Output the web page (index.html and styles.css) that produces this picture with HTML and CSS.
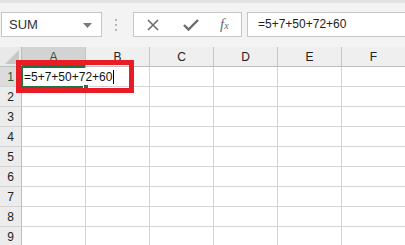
FILE: index.html
```html
<!DOCTYPE html>
<html lang="en">
<head>
    <meta charset="UTF-8">
    <title>Sheet</title>
    <link rel="stylesheet" href="styles.css">
</head>
<body>
    <!-- formula bar -->
    <div class="toolbar">
        <div class="namebox">
            <span>SUM</span>
            <svg class="caret" width="9" height="5" viewBox="0 0 9 5"><path d="M0 0 H9 L4.5 5 Z" fill="#7a7a7a"/></svg>
        </div>
        <div class="grip"><i></i><i></i><i></i></div>
        <div class="fxbox">
            <svg class="icon" width="12" height="12" viewBox="0 0 12 12"><path d="M1 1 L11 11 M11 1 L1 11" stroke="#6b6b6b" stroke-width="1.6" fill="none"/></svg>
            <svg class="icon" width="16" height="12" viewBox="0 0 16 12"><path d="M1 6 L5.5 10.5 L15 1" stroke="#6b6b6b" stroke-width="2.4" fill="none"/></svg>
            <span class="fx">f<sub>x</sub></span>
        </div>
        <div class="formula">=5+7+50+72+60</div>
    </div>

    <!-- grid -->
    <div class="sheet">
        <div class="corner"><i></i></div>
        <div class="colhead selected">A</div>
        <div class="colhead">B</div>
        <div class="colhead">C</div>
        <div class="colhead">D</div>
        <div class="colhead">E</div>
        <div class="colhead">F</div>

        <div class="rowhead selected">1</div>
        <div class="cell active">
            <span class="entry">=5+7+50+72+60<b class="cursor"></b></span>
            <i class="handle"></i>
        </div>
        <div class="cell"></div><div class="cell"></div><div class="cell"></div><div class="cell"></div><div class="cell"></div>

        <div class="rowhead">2</div>
        <div class="cell"></div><div class="cell"></div><div class="cell"></div><div class="cell"></div><div class="cell"></div><div class="cell"></div>
        <div class="rowhead">3</div>
        <div class="cell"></div><div class="cell"></div><div class="cell"></div><div class="cell"></div><div class="cell"></div><div class="cell"></div>
        <div class="rowhead">4</div>
        <div class="cell"></div><div class="cell"></div><div class="cell"></div><div class="cell"></div><div class="cell"></div><div class="cell"></div>
        <div class="rowhead">5</div>
        <div class="cell"></div><div class="cell"></div><div class="cell"></div><div class="cell"></div><div class="cell"></div><div class="cell"></div>
        <div class="rowhead">6</div>
        <div class="cell"></div><div class="cell"></div><div class="cell"></div><div class="cell"></div><div class="cell"></div><div class="cell"></div>
        <div class="rowhead">7</div>
        <div class="cell"></div><div class="cell"></div><div class="cell"></div><div class="cell"></div><div class="cell"></div><div class="cell"></div>
        <div class="rowhead">8</div>
        <div class="cell"></div><div class="cell"></div><div class="cell"></div><div class="cell"></div><div class="cell"></div><div class="cell"></div>
        <div class="rowhead">9</div>
        <div class="cell"></div><div class="cell"></div><div class="cell"></div><div class="cell"></div><div class="cell"></div><div class="cell"></div>
    </div>

    <!-- red highlight drawn over the sheet -->
    <div class="mark"></div>
</body>
</html>
```

FILE: styles.css
```css
* {
    box-sizing: border-box;
}

body {
    margin: 0;
    width: 405px;
    height: 245px;
    overflow: hidden;
    position: relative;
    background-color: #fff;
    font-family: "Liberation Sans", Arial, sans-serif;
    color: #222;
}

.toolbar {
    height: 47px;
    background-color: #f3f3f3;
    border-top: 3px solid #e3e3e3;
    display: flex;
    align-items: flex-start;
    padding-top: 9px;
    padding-left: 1px;
}

.namebox {
    width: 101px;
    height: 25px;
    background-color: #fff;
    border: 1px solid #c6c6c6;
    display: flex;
    align-items: center;
    justify-content: space-between;
    padding: 0 9px 0 7px;
    font-size: 13px;
    color: #333;
}

.caret {
    margin-top: 1px;
}

.grip {
    width: 31px;
    height: 25px;
    padding-right: 3px;
    display: flex;
    flex-direction: column;
    align-items: center;
    justify-content: center;
    gap: 3px;
}

.grip i {
    width: 2px;
    height: 2px;
    background-color: #b5b5b5;
}

.fxbox {
    width: 109px;
    height: 25px;
    background-color: #fff;
    border: 1px solid #c6c6c6;
    display: flex;
    align-items: center;
    padding-left: 13px;
    gap: 24px;
}

.fx {
    font-family: "Liberation Serif", "Times New Roman", serif;
    font-style: italic;
    font-size: 15px;
    color: #6b6b6b;
    margin-left: -3px;
}

.fx sub {
    font-size: 10px;
    vertical-align: 0;
}

.formula {
    flex: 1;
    height: 25px;
    margin-left: 5px;
    background-color: #fff;
    border: 1px solid #c6c6c6;
    border-right: none;
    padding-left: 10px;
    font-size: 12px;
    line-height: 23px;
    color: #222;
}

.sheet {
    display: grid;
    grid-template-columns: 22px repeat(6, 64px);
    grid-auto-rows: 20px;
}

.corner {
    background-color: #e9e9e9;
    border-right: 1px solid #bdbdbd;
    border-bottom: 1px solid #bdbdbd;
    position: relative;
}

.corner i {
    position: absolute;
    right: 2px;
    bottom: 2px;
    width: 0;
    height: 0;
    border-left: 14px solid transparent;
    border-bottom: 14px solid #c8c8c8;
}

.colhead {
    background-color: #efefef;
    border-right: 1px solid #c6c6c6;
    border-bottom: 1px solid #bdbdbd;
    text-align: center;
    font-size: 12px;
    line-height: 20px;
    color: #222;
}

.colhead.selected {
    background-color: #d3d3d3;
    border-bottom: 2px solid #217346;
    color: #185c37;
}

.rowhead {
    background-color: #ececec;
    border-right: 1px solid #bdbdbd;
    border-bottom: 1px solid #d4d4d4;
    text-align: center;
    font-size: 12px;
    line-height: 20px;
    color: #222;
}

.rowhead.selected {
    background-color: #dcdcdc;
    color: #185c37;
}

.cell {
    border-right: 1px solid #d4d4d4;
    border-bottom: 1px solid #d4d4d4;
}

/* cell in edit mode: the text runs over B1, so no line on its right */
.cell.active {
    position: relative;
    border: 2px solid #217346;
    border-right: 1px solid #fff;
    margin: -1px 0 -1px -1px;
}

.entry {
    position: absolute;
    left: 1px;
    top: 1px;
    font-size: 12px;
    line-height: 17px;
    white-space: nowrap;
    color: #111;
    z-index: 2;
}

.cursor {
    display: inline-block;
    width: 1px;
    height: 14px;
    margin-left: 1px;
    vertical-align: -3px;
    background-color: #000;
}

.handle {
    position: absolute;
    right: -4px;
    bottom: -4px;
    width: 6px;
    height: 6px;
    background-color: #217346;
    border: 1px solid #fff;
    z-index: 3;
}

.mark {
    position: absolute;
    left: 16px;
    top: 60px;
    width: 118px;
    height: 33px;
    border: 5px solid #e81c24;
    z-index: 5;
}
```
